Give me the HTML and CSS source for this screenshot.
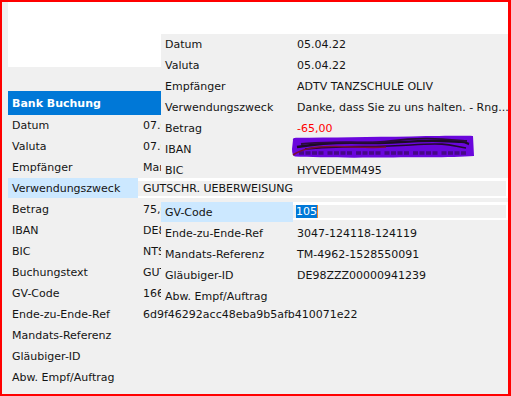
FILE: index.html
```html
<!DOCTYPE html>
<html lang="de">
<head>
<meta charset="utf-8">
<title>Bank Buchung</title>
<link rel="stylesheet" href="styles.css">
</head>
<body>
<div class="screen">
  <div class="topwhite"></div>

  <div class="win-left">
    <div class="head">Bank Buchung</div>
    <div class="rows">
      <div class="lab">Datum</div><div class="val clip">07.04.22</div>
      <div class="lab">Valuta</div><div class="val clip">07.04.22</div>
      <div class="lab">Empfänger</div><div class="val clip">Marion Kaiser</div>
      <div class="lab sel">Verwendungszweck</div><div class="val"><div class="edit">GUTSCHR. UEBERWEISUNG</div></div>
      <div class="lab">Betrag</div><div class="val clip">75,00</div>
      <div class="lab">IBAN</div><div class="val clip">DE89 3704 0044 0532 0130 00</div>
      <div class="lab">BIC</div><div class="val clip">NTSBDEB1XXX</div>
      <div class="lab">Buchungstext</div><div class="val clip">GUTSCHR. UEBERWEISUNG</div>
      <div class="lab">GV-Code</div><div class="val clip">166</div>
      <div class="lab">Ende-zu-Ende-Ref</div><div class="val">6d9f46292acc48eba9b5afb410071e22</div>
      <div class="lab">Mandats-Referenz</div><div class="val"></div>
      <div class="lab">Gläubiger-ID</div><div class="val"></div>
      <div class="lab">Abw. Empf/Auftrag</div><div class="val"></div>
    </div>
  </div>

  <div class="win-over">
    <div class="lab">Datum</div><div class="oval">05.04.22</div>
    <div class="lab">Valuta</div><div class="oval">05.04.22</div>
    <div class="lab">Empfänger</div><div class="oval">ADTV TANZSCHULE OLIV</div>
    <div class="lab">Verwendungszweck</div><div class="oval">Danke, dass Sie zu uns halten. - Rng...</div>
    <div class="lab">Betrag</div><div class="oval neg">-65,00</div>
    <div class="lab">IBAN</div>
    <div class="oval redact">
      <svg class="scribble" width="184" height="24" viewBox="0 0 184 24">
        <path d="M2 5 Q1 3 5 2.8 C40 2.4 80 1.8 120 1.4 C150 1 170 0.6 182 1 L183 21 C160 22.8 120 22 80 22.6 C50 23 20 22.2 4 21.6 Q1 20.8 1 14 Z" fill="#6a06dc"/>
        <path d="M8 18 H178" stroke="#220a30" stroke-width="3.5" stroke-dasharray="5 1.5 5 1.5 5 1.5 5 4" opacity="0.5" fill="none"/>
        <path d="M6 12 C30 8 50 7 75 8 S120 5 150 6 S172 7 178 9" stroke="#1c0c24" stroke-width="2.4" fill="none"/>
        <path d="M10 9 C40 5 70 10 100 6 S150 4 176 6" stroke="#2a0b3a" stroke-width="1.8" fill="none"/>
        <path d="M14 14 C50 10 80 13 120 10 S160 11 175 13" stroke="#24082e" stroke-width="1.6" fill="none"/>
        <path d="M2 20 C10 14 25 11 45 11.5 C70 12 80 13 95 12" stroke="#7a1030" stroke-width="1.6" fill="none"/>
      </svg>
    </div>
    <div class="lab">BIC</div><div class="oval">HYVEDEMM495</div>
    <div class="lab"></div><div class="oval"></div>
    <div class="lab sel">GV-Code</div><div class="oval"><div class="gvedit"><span class="pick">105</span><span class="caret"></span></div></div>
    <div class="lab">Ende-zu-Ende-Ref</div><div class="oval">3047-124118-124119</div>
    <div class="lab">Mandats-Referenz</div><div class="oval">TM-4962-1528550091</div>
    <div class="lab">Gläubiger-ID</div><div class="oval">DE98ZZZ00000941239</div>
    <div class="lab">Abw. Empf/Auftrag</div><div class="oval"></div>
  </div>
</div>
</body>
</html>
```

FILE: styles.css
```css
* {
  margin: 0;
  padding: 0;
  box-sizing: border-box;
}

html, body {
  width: 511px;
  height: 396px;
  overflow: hidden;
}

body {
  font-family: "DejaVu Sans", Verdana, sans-serif;
  font-size: 11px;
  color: #141414;
  background: #f0f0f0;
}

.screen {
  position: relative;
  width: 511px;
  height: 396px;
  border-style: solid;
  border-color: #ff0000;
  border-width: 2px 3px 2px 2px;
  background: #f0f0f0;
  padding-left: 6px;
  overflow: hidden;
}

.topwhite {
  height: 65px;
  background: #ffffff;
}

.win-left {
  margin-top: 24px;
  width: 500px;
}

.head {
  height: 24px;
  line-height: 26px;
  background: #0078d7;
  color: #ffffff;
  font-weight: bold;
  padding-left: 4px;
  overflow: hidden;
}

.rows {
  display: grid;
  grid-template-columns: 130px 1fr;
  grid-auto-rows: 20px;
  row-gap: 1px;
}

.lab {
  padding-left: 4px;
  line-height: 22px;
  white-space: nowrap;
  overflow: hidden;
}

.val {
  padding-left: 5px;
  line-height: 22px;
  white-space: nowrap;
}

.clip {
  max-width: 23px;
  overflow: hidden;
  text-overflow: clip;
}

.sel {
  background: #cce8ff;
}

.edit {
  position: relative;
  z-index: 2;
  margin-left: -5px;
  padding-left: 5px;
  padding-top: 1px;
  width: 370px;
  height: 20px;
  line-height: 14px;
  background: #f0f0f0;
  border-top: 3px solid #ffffff;
  border-bottom: 2px solid #ffffff;
  border-right: 2px solid #ffffff;
}

.win-over {
  position: absolute;
  left: 159px;
  top: 32px;
  width: 347px;
  height: 273px;
  z-index: 1;
  background: #f0f0f0;
  display: grid;
  grid-template-columns: 132px 1fr;
  grid-auto-rows: 20px;
  row-gap: 1px;
  align-content: start;
}

.oval {
  padding-left: 4px;
  line-height: 22px;
  white-space: nowrap;
  overflow: hidden;
}

.neg {
  color: #ff0000;
}

.redact {
  position: relative;
  overflow: visible;
}

.scribble {
  position: absolute;
  left: -2px;
  top: -4px;
  display: block;
}

.gvedit {
  margin-left: -4px;
  padding-left: 3px;
  height: 18px;
  line-height: 13px;
  background: #f0f0f0;
  border-top: 3px solid #ffffff;
  border-bottom: 2px solid #ffffff;
  border-right: 2px solid #ffffff;
  display: flex;
  align-items: flex-start;
}

.pick {
  display: inline-block;
  height: 13px;
  background: #0078d7;
  color: #ffffff;
}

.caret {
  display: inline-block;
  width: 1px;
  height: 13px;
  background: #f0862a;
}
```
